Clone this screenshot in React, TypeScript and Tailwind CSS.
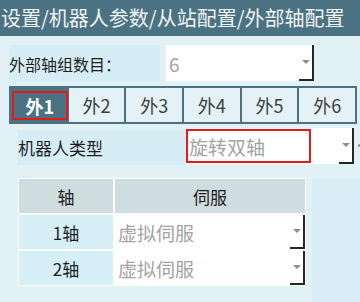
import React from "react";

const FONT = "font-['Noto_Sans_CJK_SC','Noto_Sans',sans-serif]";

function Arrow() {
  return (
    <div className="w-[15px] self-stretch flex items-center justify-center border-r-2 border-b-2 border-[#262626]">
      <svg width="8" height="5" viewBox="0 0 8 5">
        <polygon points="0,0 8,0 4,4" fill="#8f8f8f" />
      </svg>
    </div>
  );
}

function Combo({ text, w, size = "text-[19px]" }: { text: string; w: string; size?: string }) {
  return (
    <div className={`${w} h-full bg-white flex items-stretch`}>
      <div className={`flex-1 flex items-center pl-[3px] text-[#a3a3a3] ${size} leading-none`}>{text}</div>
      <Arrow />
    </div>
  );
}

export default function App() {
  const tabs = ["外1", "外2", "外3", "外4", "外5", "外6"];
  return (
    <div className={`w-[360px] h-[302px] bg-[#e2f1f6] overflow-hidden flex flex-col ${FONT}`}>
      <div className="h-[36px] shrink-0 bg-[#4b7282] text-[#f0f3f4] text-[20px] leading-none flex items-center pl-[1px] whitespace-nowrap">
        设置/机器人参数/从站配置/外部轴配置
      </div>

      <div className="mt-[9px] ml-[9px] flex gap-[6px] h-[37px] shrink-0">
        <div className="w-[151px] h-[37px] bg-[#d7edf5] flex items-center text-[16px] text-[#1e1e1e] leading-none">
          外部轴组数目：
        </div>
        <div className="h-[36px]">
          <Combo text="6" w="w-[148px]" size="text-[19px]" />
        </div>
      </div>

      <div className="mt-[4px] ml-[9px] w-[348px] h-[38px] shrink-0 bg-[#4b7282] p-[2px] grid grid-cols-6 gap-[2px]">
        {tabs.map((t, i) =>
          i === 0 ? (
            <div key={t} className="flex items-stretch pt-[3px] pb-[2px] pl-[1px]">
              <div className="flex-1 border-2 border-[#e3191c] flex items-center justify-center text-white font-bold text-[18px] leading-none -mr-[1px]">
                {t}
              </div>
            </div>
          ) : (
            <div key={t} className="bg-[#e4f2f7] flex items-center justify-center text-[#3c3c3c] text-[18px] leading-none">
              {t}
            </div>
          )
        )}
      </div>

      <div className="mt-[4px] ml-[18px] flex h-[36px] shrink-0">
        <div className="w-[168px] mt-[2px] h-[35px] bg-[#d7edf5] flex items-center text-[17px] text-[#1e1e1e] leading-none">
          机器人类型
        </div>
        <div className="relative h-[36px]">
          <Combo text="旋转双轴" w="w-[168px]" />
          <div className="absolute left-0 top-[1px] w-[125px] h-[34px] border-2 border-[#e3191c] pointer-events-none" />
        </div>
        <div className="ml-[4px] w-[2px] h-[3px] mt-[16px] bg-[#9aa4a8]" />
      </div>

      <div className="mt-[14px] flex flex-1">
        <div className="ml-[18px] w-[288px] h-[108px] bg-white p-[1px] grid grid-cols-[94px_190px] grid-rows-[34px_34px_34px] gap-[2px]">
          <div className="bg-[#cfdde1] flex items-center justify-center text-[17px] text-[#1e1e1e] leading-none">轴</div>
          <div className="bg-[#cfdde1] flex items-center justify-center text-[17px] text-[#1e1e1e] leading-none">伺服</div>
          <div className="bg-[#d6eef6] flex items-center justify-center text-[17px] text-[#1e1e1e] leading-none">1轴</div>
          <Combo text="虚拟伺服" w="w-[190px]" />
          <div className="bg-[#d6eef6] flex items-center justify-center text-[17px] text-[#1e1e1e] leading-none">2轴</div>
          <Combo text="虚拟伺服" w="w-[190px]" />
        </div>
        <div className="ml-[6px] flex-1 bg-[#d8edf5]" />
      </div>
    </div>
  );
}
